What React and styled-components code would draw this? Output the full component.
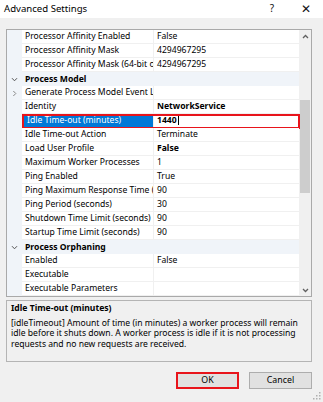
import styled, { createGlobalStyle } from "styled-components";

const GlobalStyle = createGlobalStyle`
  html, body { margin: 0; padding: 0; background: #f0f0f0; }
  body { font-family: "Segoe UI", "Noto Sans", "Open Sans", sans-serif; }
`;

const rows = [
  { name: "Processor Affinity Enabled", value: "False" },
  { name: "Processor Affinity Mask", value: "4294967295" },
  { name: "Processor Affinity Mask (64-bit option)", value: "4294967295" },
  { category: "Process Model" },
  { name: "Generate Process Model Event Log Entry", value: "", collapsed: true },
  { name: "Identity", value: "NetworkService", bold: true },
  { name: "Idle Time-out (minutes)", value: "1440", bold: true, selected: true },
  { name: "Idle Time-out Action", value: "Terminate" },
  { name: "Load User Profile", value: "False", bold: true },
  { name: "Maximum Worker Processes", value: "1" },
  { name: "Ping Enabled", value: "True" },
  { name: "Ping Maximum Response Time (seconds)", value: "90" },
  { name: "Ping Period (seconds)", value: "30" },
  { name: "Shutdown Time Limit (seconds)", value: "90" },
  { name: "Startup Time Limit (seconds)", value: "90" },
  { category: "Process Orphaning" },
  { name: "Enabled", value: "False" },
  { name: "Executable", value: "" },
  { name: "Executable Parameters", value: "" },
];

const Window = styled.div`
  position: relative;
  width: 323px;
  height: 402px;
  background: #f0f0f0;
  display: flex;
  flex-direction: column;
  overflow: hidden;
  color: #000;
  font-size: 8.6px;
`;

const TitleBar = styled.div`
  height: 18px;
  background: #fff;
  display: flex;
  align-items: center;
  padding: 0 0 0 4px;
  font-size: 9.6px;
`;

const Title = styled.div`
  flex: 1;
  padding-bottom: 2px;
`;

const TitleButton = styled.div`
  width: 34px;
  text-align: center;
  font-size: ${(p) => p.$size || "10px"};
  color: #111;
  padding-bottom: 2px;
`;

const Body = styled.div`
  flex: 1;
  display: flex;
  flex-direction: column;
  padding: 11px 11px 0 6px;
`;

const Grid = styled.div`
  height: 266px;
  border: 1px solid #a9a9a9;
  background: #fff;
  display: flex;
`;

const Rows = styled.div`
  flex: 1;
  display: flex;
  flex-direction: column;
`;

const Row = styled.div`
  position: relative;
  height: 14px;
  display: grid;
  grid-template-columns: 15px 131px 1fr;
  background: ${(p) => (p.$category ? "#f0f4f9" : "#fff")};
`;

const Gutter = styled.div`
  background: #f0f4f9;
  display: flex;
  align-items: center;
  justify-content: center;
`;

const Cell = styled.div`
  display: flex;
  align-items: center;
  padding-left: 3px;
  white-space: nowrap;
  overflow: hidden;
  border-bottom: 1px solid #f0f0f0;
  border-left: ${(p) => (p.$value ? "1px solid #f0f0f0" : "none")};
  font-weight: ${(p) => (p.$bold ? 700 : 400)};
  background: ${(p) => (p.$selected ? "#0078d7" : "transparent")};
  color: ${(p) => (p.$selected ? "#fff" : "#000")};
  margin-left: ${(p) => (p.$selected ? "2px" : "0")};
  padding-bottom: 1px;
`;

const CategoryCell = styled.div`
  grid-column: 2 / 4;
  display: flex;
  align-items: center;
  padding-left: 3px;
  font-weight: 700;
  padding-bottom: 1px;
`;

const Caret = styled.span`
  display: inline-block;
  width: 1px;
  height: 10px;
  background: #000;
  margin-left: 1px;
`;

const Mark = styled.span`
  position: absolute;
  left: 15px;
  right: -1px;
  top: 0;
  height: 15px;
  border: 2px solid #e8141b;
  box-sizing: border-box;
  pointer-events: none;
`;

const ScrollBar = styled.div`
  width: 12px;
  background: #f0f0f0;
  display: flex;
  flex-direction: column;
  align-items: center;
`;

const Arrow = styled.div`
  height: 12px;
  display: flex;
  align-items: center;
  justify-content: center;
`;

const Track = styled.div`
  flex: 1;
  width: 100%;
  display: flex;
  flex-direction: column;
  align-items: center;
  padding-top: 58px;
`;

const Thumb = styled.div`
  width: 10px;
  height: 93px;
  background: #cdcdcd;
`;

const Description = styled.div`
  margin-top: 3px;
  height: 62px;
  box-sizing: border-box;
  border: 1px solid #b4b4b4;
  padding: 2px 4px 0 4px;
  font-size: 8.6px;
  line-height: 10.6px;
`;

const DescTitle = styled.div`
  font-weight: 700;
  margin-bottom: 4px;
`;

const Buttons = styled.div`
  margin-top: 10px;
  display: flex;
  justify-content: flex-end;
  gap: 10px;
`;

const Button = styled.div`
  width: 63px;
  height: 17px;
  box-sizing: border-box;
  background: #e1e1e1;
  border: ${(p) => (p.$marked ? "2px solid #e8141b" : "1px solid #adadad")};
  display: flex;
  align-items: center;
  justify-content: center;
  font-size: 8.8px;
  padding-bottom: 1px;
`;

const Grip = styled.svg`
  position: absolute;
  right: 2px;
  bottom: 2px;
`;

function Chevron({ open }) {
  return (
    <svg width="7" height="7" viewBox="0 0 7 7">
      {open ? (
        <path d="M1 2.2 L3.5 4.8 L6 2.2" fill="none" stroke="#555" strokeWidth="1" />
      ) : (
        <path d="M2.3 1 L4.8 3.5 L2.3 6" fill="none" stroke="#888" strokeWidth="1" />
      )}
    </svg>
  );
}

function ScrollArrow({ down }) {
  return (
    <svg width="7" height="5" viewBox="0 0 7 5">
      <path
        d={down ? "M1 1 L3.5 3.5 L6 1" : "M1 4 L3.5 1.5 L6 4"}
        fill="none"
        stroke="#606060"
        strokeWidth="1.3"
      />
    </svg>
  );
}

function PropertyRow({ row }) {
  if (row.category) {
    return (
      <Row $category>
        <Gutter>
          <Chevron open />
        </Gutter>
        <CategoryCell>{row.category}</CategoryCell>
      </Row>
    );
  }
  return (
    <Row>
      <Gutter>{row.collapsed && <Chevron />}</Gutter>
      <Cell $selected={row.selected}>{row.name}</Cell>
      <Cell $value $bold={row.bold}>
        {row.value}
        {row.selected && <Caret />}
      </Cell>
      {row.selected && <Mark />}
    </Row>
  );
}

export default function App() {
  return (
    <>
      <GlobalStyle />
      <Window>
        <TitleBar>
          <Title>Advanced Settings</Title>
          <TitleButton $size="10px">?</TitleButton>
          <TitleButton $size="12px">✕</TitleButton>
        </TitleBar>
        <Body>
          <Grid>
            <Rows>
              {rows.map((row, i) => (
                <PropertyRow key={i} row={row} />
              ))}
            </Rows>
            <ScrollBar>
              <Arrow>
                <ScrollArrow />
              </Arrow>
              <Track>
                <Thumb />
              </Track>
              <Arrow>
                <ScrollArrow down />
              </Arrow>
            </ScrollBar>
          </Grid>
          <Description>
            <DescTitle>Idle Time-out (minutes)</DescTitle>
            [idleTimeout] Amount of time (in minutes) a worker process will remain idle before it
            shuts down. A worker process is idle if it is not processing requests and no new
            requests are received.
          </Description>
          <Buttons>
            <Button $marked>OK</Button>
            <Button>Cancel</Button>
          </Buttons>
        </Body>
        <Grip width="8" height="8" viewBox="0 0 8 8">
          {[
            [6, 0],
            [6, 3],
            [3, 3],
            [6, 6],
            [3, 6],
            [0, 6],
          ].map(([x, y], i) => (
            <rect key={i} x={x} y={y} width="1.5" height="1.5" fill="#b0b0b0" />
          ))}
        </Grip>
      </Window>
    </>
  );
}
